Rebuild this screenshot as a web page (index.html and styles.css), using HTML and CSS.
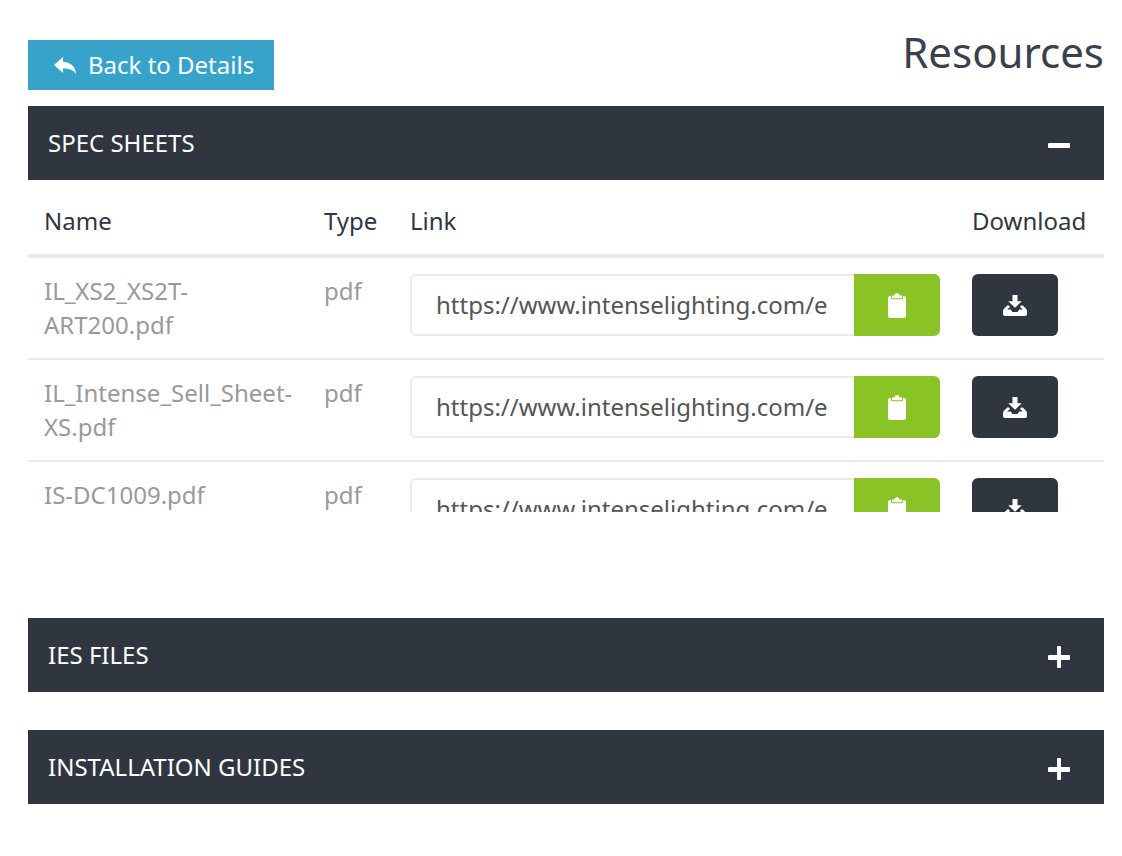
FILE: index.html
```html
<!DOCTYPE html>
<html lang="en">
<head>
<meta charset="utf-8">
<meta name="viewport" content="width=device-width, initial-scale=1">
<title>Resources</title>
<link rel="stylesheet" href="styles.css">
</head>
<body>
<svg class="sprite" aria-hidden="true">
  <symbol id="clipboard" viewBox="0 0 18 25">
    <path d="M2 3h1.100v1.900q0 1.300 1.300 1.300h9.200q1.300 0 1.300-1.300V3H16q2 0 2 2v18q0 2-2 2H2q-2 0-2-2V5q0-2 2-2z"/>
    <path d="M4 2.500h2.200Q6.700 0 9 0t2.800 2.500H14v2q0 .700-.700.700H4.700Q4 5.200 4 4.500z"/>
  </symbol>
  <symbol id="download" viewBox="0 0 24 22">
    <path d="M9.500 0h5v6.200h4.300L12 12.800 5.200 6.200h4.300z"/>
    <path d="M4.200 10.600H6l1 1.400-3 2.600h3.800L9.400 17h5.200l1.600-2.400H20L17 12l1-1.400h1.800l3.200 3.200q1 1 1 2.500v2.900q0 1.800-1.800 1.800H1.800Q0 21 0 19.200v-2.900q0-1.500 1-2.500z"/>
  </symbol>
</svg>
<main class="page">
  <header class="page-header">
    <a class="back" href="#">
      <svg class="back-icon" viewBox="0 0 22 17" aria-hidden="true"><path d="M0 8L9 0v4.700c7 .300 12.500 4.300 13 12.300-2.800-4-6.500-5.400-13-5.400V16z"/></svg>
      Back to Details
    </a>
    <h1 class="title">Resources</h1>
  </header>

  <section class="panel">
    <h2 class="panel-heading"><button class="panel-toggle" type="button" aria-expanded="true">SPEC SHEETS
      <svg class="toggle-icon" viewBox="0 0 22 26" aria-hidden="true"><rect y="13" width="22" height="5" rx="1"/></svg></button></h2>
    <div class="panel-body">
      <table class="files">
        <thead>
          <tr><th class="col-name">Name</th><th class="col-type">Type</th><th>Link</th><th class="col-download">Download</th></tr>
        </thead>
        <tbody>
          <tr>
            <td>IL_XS2_XS2T-ART200.pdf</td><td>pdf</td>
            <td><div class="link-group"><input class="link" type="text" readonly aria-label="Link to IL_XS2_XS2T-ART200.pdf" value="https://www.intenselighting.com/e"><button class="copy" type="button" aria-label="Copy link"><svg class="copy-icon"><use href="#clipboard"/></svg></button></div></td>
            <td><button class="download" type="button" aria-label="Download"><svg class="download-icon"><use href="#download"/></svg></button></td>
          </tr>
          <tr>
            <td>IL_Intense_Sell_Sheet-XS.pdf</td><td>pdf</td>
            <td><div class="link-group"><input class="link" type="text" readonly aria-label="Link to IL_Intense_Sell_Sheet-XS.pdf" value="https://www.intenselighting.com/e"><button class="copy" type="button" aria-label="Copy link"><svg class="copy-icon"><use href="#clipboard"/></svg></button></div></td>
            <td><button class="download" type="button" aria-label="Download"><svg class="download-icon"><use href="#download"/></svg></button></td>
          </tr>
          <tr>
            <td>IS-DC1009.pdf</td><td>pdf</td>
            <td><div class="link-group"><input class="link" type="text" readonly aria-label="Link to IS-DC1009.pdf" value="https://www.intenselighting.com/e"><button class="copy" type="button" aria-label="Copy link"><svg class="copy-icon"><use href="#clipboard"/></svg></button></div></td>
            <td><button class="download" type="button" aria-label="Download"><svg class="download-icon"><use href="#download"/></svg></button></td>
          </tr>
        </tbody>
      </table>
    </div>
  </section>

  <section class="panel">
    <h2 class="panel-heading"><button class="panel-toggle" type="button" aria-expanded="false">IES FILES
      <svg class="toggle-icon" viewBox="0 0 22 26" aria-hidden="true"><rect y="13" width="22" height="5" rx="1"/><rect x="9" y="4" width="4" height="22" rx="1"/></svg></button></h2>
  </section>

  <section class="panel">
    <h2 class="panel-heading"><button class="panel-toggle" type="button" aria-expanded="false">INSTALLATION GUIDES
      <svg class="toggle-icon" viewBox="0 0 22 26" aria-hidden="true"><rect y="13" width="22" height="5" rx="1"/><rect x="9" y="4" width="4" height="22" rx="1"/></svg></button></h2>
  </section>
</main>
</body>
</html>
```
FILE: styles.css
```css
* { box-sizing: border-box; }

body {
  margin: 0;
  background: #fff;
  color: #2f3640;
  font: 24px/34px "Noto Sans", sans-serif;
}

button, input { font: inherit; }
button { border: 0; cursor: pointer; }
svg { display: block; fill: #fff; }

.sprite { display: none; }

.page { padding: 24px 18px 52px 28px; }

.page-header {
  display: flex;
  align-items: flex-start;
  justify-content: space-between;
  margin-bottom: 16px;
}

.back {
  display: flex;
  align-items: center;
  gap: 12px;
  margin-top: 16px;
  padding: 8px 20px 8px 26px;
  background: #37a3ca;
  color: #fff;
  text-decoration: none;
}

.back-icon { width: 22px; height: 17px; }

.title {
  margin: 0;
  color: #3a404d;
  font-size: 42px;
  font-weight: 400;
  line-height: 56px;
}

.panel + .panel { margin-top: 38px; }

.panel-heading {
  margin: 0;
  font-size: 24px;
  font-weight: 400;
}

.panel-toggle {
  display: flex;
  align-items: center;
  justify-content: space-between;
  width: 100%;
  padding: 20px 34px 20px 20px;
  background: #2f3640;
  color: #fff;
  text-align: left;
}

.toggle-icon { width: 22px; height: 26px; }

.panel-body {
  height: 332px;
  margin-bottom: 106px;
  padding-top: 8px;
  overflow: hidden;
}

.files {
  width: 100%;
  table-layout: fixed;
  border-collapse: separate;
  border-spacing: 0;
}

.col-name { width: 280px; }
.col-type { width: 86px; }
.col-download { width: 148px; }

.files th {
  padding: 16px;
  border-bottom: 4px solid #ebebeb;
  font-weight: 400;
  text-align: left;
}

.files td {
  padding: 16px;
  color: #999;
  vertical-align: top;
}

.files tr + tr td { border-top: 2px solid #ebebeb; }

.link-group { display: flex; }

.link {
  flex: 1;
  min-width: 0;
  height: 62px;
  padding: 0 22px 2px 24px;
  border: 2px solid #ebebeb;
  border-right: 0;
  border-radius: 6px 0 0 6px;
  background: #fff;
  color: #555;
}

.copy, .download {
  display: flex;
  align-items: center;
  justify-content: center;
  width: 86px;
  height: 62px;
  padding: 0;
}

.copy { border-radius: 0 6px 6px 0; background: #89c325; }
.download { padding-top: 2px; border-radius: 6px; background: #2f3640; }

.copy-icon { width: 18px; height: 25px; }
.download-icon { width: 24px; height: 22px; }
```
